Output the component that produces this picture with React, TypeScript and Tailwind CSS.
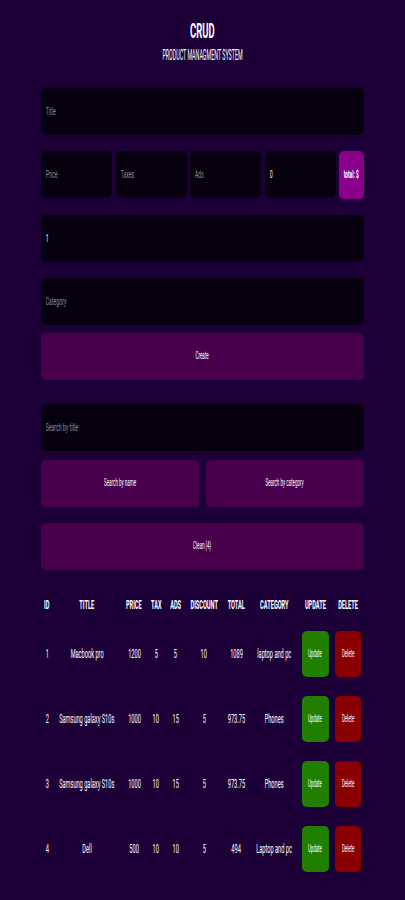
import { useState } from "react";

type Product = {
  id: number;
  title: string;
  price: number;
  tax: number;
  ads: number;
  discount: number;
  total: string;
  category: string;
};

const products: Product[] = [
  { id: 1, title: "Macbook pro", price: 1200, tax: 5, ads: 5, discount: 10, total: "1089", category: "laptop and pc" },
  { id: 2, title: "Samsung galaxy S10s", price: 1000, tax: 10, ads: 15, discount: 5, total: "973.75", category: "Phones" },
  { id: 3, title: "Samsung galaxy S10s", price: 1000, tax: 10, ads: 15, discount: 5, total: "973.75", category: "Phones" },
  { id: 4, title: "Dell", price: 500, tax: 10, ads: 10, discount: 5, total: "494", category: "Laptop and pc" },
];

const headers = ["ID", "TITLE", "PRICE", "TAX", "ADS", "DISCOUNT", "TOTAL", "CATEGORY", "UPDATE", "DELETE"];
const widths = ["w-[12px]", "w-[68px]", "w-[26px]", "w-[18px]", "w-[21px]", "w-[36px]", "w-[28px]", "w-[48px]", "w-[34px]", "w-[32px]"];

// the screenshot text is very narrow, so squeeze it horizontally
function Squeeze({ children, className = "scale-x-[0.47]" }: { children: React.ReactNode; className?: string }) {
  return <span className={`inline-block whitespace-nowrap ${className}`}>{children}</span>;
}

function Field({ placeholder, value }: { placeholder: string; value?: string }) {
  const [text, setText] = useState(value ?? "");
  return (
    <div className="h-[47px] overflow-hidden rounded-[5px] bg-[#07000f]">
      <input
        value={text}
        placeholder={placeholder}
        onChange={(e) => setText(e.target.value)}
        className="h-full w-[213%] origin-left scale-x-[0.47] bg-transparent px-[10px] text-[11px] text-white outline-none placeholder:text-[#8d8a92]"
      />
    </div>
  );
}

function Btn({ label, className = "" }: { label: string; className?: string }) {
  return (
    <button className={`flex h-[47px] items-center justify-center rounded-[5px] bg-[#48004c] text-[11px] text-white ${className}`}>
      <Squeeze className="scale-x-[0.41]">{label}</Squeeze>
    </button>
  );
}

export default function App() {
  return (
    <div className="min-h-[900px] bg-[#1e0039] px-[41px] pb-10 pt-[19px] font-['Roboto',sans-serif] text-white">
      <div className="flex flex-col items-center">
        <h2 className="text-[21px] font-bold leading-[24px]">
          <Squeeze className="scale-x-[0.45]">CRUD</Squeeze>
        </h2>
        <p className="mt-[3px] text-[14px] leading-[18px]">
          <Squeeze className="scale-x-[0.38]">PRODUCT MANAGMENT SYSTEM</Squeeze>
        </p>
      </div>

      <div className="mt-[24px] flex flex-col">
        <Field placeholder="Title" />
        <div className="mt-4 grid grid-cols-[1fr_1fr_1fr_1fr_25px] gap-[3.5px]">
          <Field placeholder="Price" />
          <Field placeholder="Taxes" />
          <Field placeholder="Ads" />
          <Field placeholder="Discount" value="0" />
          <button className="flex h-[48px] items-center justify-center rounded-[5px] bg-[#8a008a] text-[11px] font-bold text-white">
            <Squeeze className="scale-x-[0.44]">total: $</Squeeze>
          </button>
        </div>
        <div className="mt-4">
          <Field placeholder="Count" value="1" />
        </div>
        <div className="mt-4">
          <Field placeholder="Category" />
        </div>
        <Btn label="Create" className="mt-2" />

        <div className="mt-6">
          <Field placeholder="Search by title" />
        </div>
        <div className="mt-[9px] grid grid-cols-2 gap-[7px]">
          <Btn label="Search by name" />
          <Btn label="Search by category" />
        </div>
        <Btn label="Clean (4)" className="mt-4" />
      </div>

      <table className="mt-[19px] w-full table-fixed text-[12px]">
        <colgroup>
          {widths.map((w, i) => (
            <col key={i} className={w} />
          ))}
        </colgroup>
        <thead>
          <tr className="h-[32px]">
            {headers.map((h) => (
              <th key={h} className="p-0 font-bold">
                <div className="flex justify-center">
                  <Squeeze>{h}</Squeeze>
                </div>
              </th>
            ))}
          </tr>
        </thead>
        <tbody>
          {products.map((p) => (
            <tr key={p.id} className="h-[65px]">
              {[p.id, p.title, p.price, p.tax, p.ads, p.discount, p.total, p.category].map((v, i) => (
                <td key={i} className="p-0">
                  <div className="flex justify-center">
                    <Squeeze>{v}</Squeeze>
                  </div>
                </td>
              ))}
              <td className="p-0">
                <div className="flex justify-center">
                  <button className="flex h-[46px] w-[27px] items-center justify-center rounded-[5px] bg-[#217f00] text-[10px] text-white">
                    <Squeeze className="scale-x-[0.44]">Update</Squeeze>
                  </button>
                </div>
              </td>
              <td className="p-0">
                <div className="flex justify-center">
                  <button className="flex h-[46px] w-[26px] items-center justify-center rounded-[5px] bg-[#8a0000] text-[10px] text-white">
                    <Squeeze className="scale-x-[0.44]">Delete</Squeeze>
                  </button>
                </div>
              </td>
            </tr>
          ))}
        </tbody>
      </table>
    </div>
  );
}
